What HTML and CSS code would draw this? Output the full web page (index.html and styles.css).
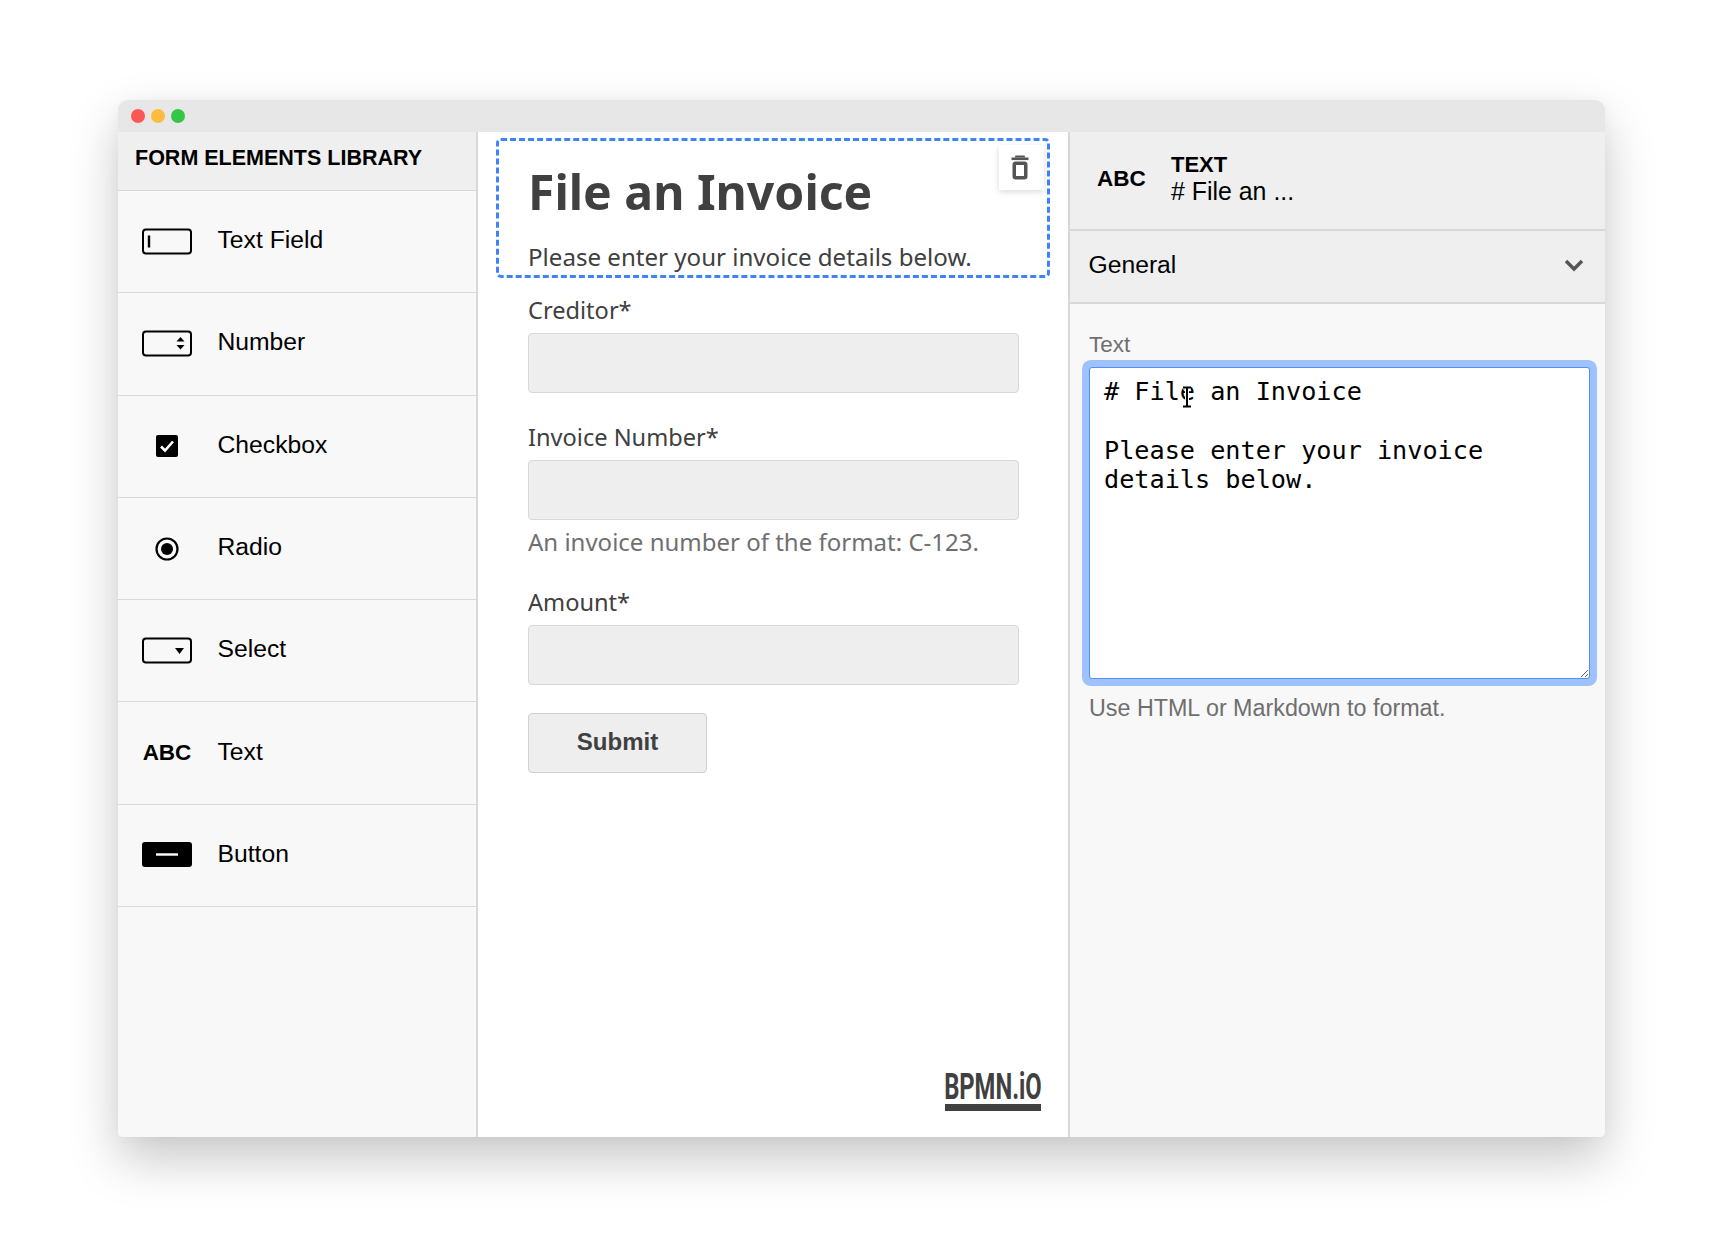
FILE: index.html
```html
<!DOCTYPE html>
<html lang="en">
<head>
    <meta charset="UTF-8">
    <title>Form Builder</title>
    <link rel="stylesheet" href="styles.css">
</head>
<body>
    <div class="window">
        <div class="titlebar">
            <span class="dot dot-red"></span>
            <span class="dot dot-yellow"></span>
            <span class="dot dot-green"></span>
        </div>
        <div class="columns">
            <aside class="library">
                <h2 class="library-title">FORM ELEMENTS LIBRARY</h2>
                <ul class="library-list">
                    <li class="library-item">
                        <span class="item-icon">
                            <svg width="50" height="28" viewBox="0 0 50 28"><rect x="1" y="1.5" width="48" height="24" rx="3" fill="none" stroke="#000" stroke-width="2"/><path d="M7 7.5v12" stroke="#000" stroke-width="2.4"/></svg>
                        </span>
                        Text Field
                    </li>
                    <li class="library-item">
                        <span class="item-icon">
                            <svg width="50" height="28" viewBox="0 0 50 28"><rect x="1" y="1.5" width="48" height="24" rx="3" fill="none" stroke="#000" stroke-width="2"/><path d="M34.5 11.5l4-4.5 4 4.5zM34.5 15l4 4.5 4-4.5z" fill="#000"/></svg>
                        </span>
                        Number
                    </li>
                    <li class="library-item">
                        <span class="item-icon">
                            <svg width="22" height="22" viewBox="0 0 22 22"><rect width="22" height="22" rx="2" fill="#000"/><path d="M5 11.5l4 4 8-9" fill="none" stroke="#fff" stroke-width="2.6"/></svg>
                        </span>
                        Checkbox
                    </li>
                    <li class="library-item">
                        <span class="item-icon">
                            <svg width="24" height="24" viewBox="0 0 24 24"><circle cx="12" cy="12" r="10.5" fill="none" stroke="#000" stroke-width="2.2"/><circle cx="12" cy="12" r="6" fill="#000"/></svg>
                        </span>
                        Radio
                    </li>
                    <li class="library-item">
                        <span class="item-icon">
                            <svg width="50" height="28" viewBox="0 0 50 28"><rect x="1" y="1.5" width="48" height="24" rx="3" fill="none" stroke="#000" stroke-width="2"/><path d="M33 11h9l-4.5 6z" fill="#000"/></svg>
                        </span>
                        Select
                    </li>
                    <li class="library-item">
                        <span class="item-icon item-abc">ABC</span>
                        Text
                    </li>
                    <li class="library-item">
                        <span class="item-icon">
                            <svg width="50" height="26" viewBox="0 0 50 26"><rect width="50" height="25" rx="3" fill="#000"/><path d="M14 12.5h22" stroke="#fff" stroke-width="2.4"/></svg>
                        </span>
                        Button
                    </li>
                </ul>
            </aside>

            <main class="canvas">
                <section class="selected-block">
                    <h1 class="form-title">File an Invoice</h1>
                    <p class="form-intro">Please enter your invoice details below.</p>
                    <button class="trash-btn" type="button" aria-label="Remove">
                        <svg width="18" height="26" viewBox="0 0 18 26"><path d="M5 0.5h8a1 1 0 0 1 1 1V2.5H4V1.5a1 1 0 0 1 1-1z" fill="#555"/><rect x="0.5" y="2.5" width="17" height="2.6" fill="#555"/><rect x="3.25" y="8.25" width="11.5" height="14.5" rx="1.5" fill="none" stroke="#555" stroke-width="3.5"/></svg>
                    </button>
                </section>
                <form class="form-fields">
                    <div class="field">
                        <label class="field-label">Creditor*</label>
                        <input class="field-input" type="text">
                    </div>
                    <div class="field">
                        <label class="field-label">Invoice Number*</label>
                        <input class="field-input" type="text">
                        <div class="field-desc">An invoice number of the format: C-123.</div>
                    </div>
                    <div class="field">
                        <label class="field-label">Amount*</label>
                        <input class="field-input" type="text">
                    </div>
                    <button class="submit-btn" type="button">Submit</button>
                </form>
                <div class="powered-by"><span class="logo-text">BPMN.iO</span></div>
            </main>

            <aside class="properties">
                <div class="props-header">
                    <span class="props-abc">ABC</span>
                    <div class="props-heading">
                        <div class="props-type">TEXT</div>
                        <div class="props-name"># File an ...</div>
                    </div>
                </div>
                <div class="props-group">
                    <span>General</span>
                    <svg width="20" height="13" viewBox="0 0 20 13"><path d="M2 2l8 8 8-8" fill="none" stroke="#555" stroke-width="3.4"/></svg>
                </div>
                <div class="props-body">
                    <label class="props-label">Text</label>
                    <div class="textarea-wrap">
                        <textarea class="props-textarea" spellcheck="false"># File an Invoice

Please enter your invoice details below.</textarea>
                        <svg class="text-cursor" width="12" height="22" viewBox="0 0 12 22"><path d="M2 1.5h8M6 1.5v19M2 20.5h8" fill="none" stroke="#fff" stroke-width="4"/><path d="M2 1.5h8M6 1.5v19M2 20.5h8" fill="none" stroke="#000" stroke-width="2"/></svg>
                    </div>
                    <div class="props-hint">Use HTML or Markdown to format.</div>
                </div>
            </aside>
        </div>
    </div>
</body>
</html>
```

FILE: styles.css
```css
body {
    margin: 0;
    padding: 100px 0 100px 118px;
    background-color: #fff;
    font-family: "Liberation Sans", Arial, sans-serif;
    color: #000;
}

.window {
    width: 1487px;
    height: 1037px;
    display: flex;
    flex-direction: column;
    border-radius: 10px 10px 5px 5px;
    background-color: #f8f8f8;
    box-shadow: 0 22px 50px rgba(0, 0, 0, 0.22), 0 0 14px rgba(0, 0, 0, 0.03);
    overflow: hidden;
}

.titlebar {
    height: 32px;
    flex: none;
    display: flex;
    align-items: center;
    gap: 6px;
    padding-left: 13px;
    background-color: #e7e7e7;
}

.dot {
    width: 14px;
    height: 14px;
    border-radius: 50%;
}

.dot-red { background-color: #fc5753; }
.dot-yellow { background-color: #fdbc40; }
.dot-green { background-color: #33c748; }

.columns {
    flex: 1;
    display: grid;
    grid-template-columns: 360px 590px 537px;
    min-height: 0;
}

/* left column */
.library {
    background-color: #f8f8f8;
    border-right: 2px solid #d8d8d8;
    box-sizing: border-box;
}

.library-title {
    margin: 0;
    height: 59px;
    box-sizing: border-box;
    padding: 13px 0 0 17px;
    font-size: 21.5px;
    line-height: 26px;
    font-weight: bold;
    background-color: #efefef;
    border-bottom: 1px solid #d8d8d8;
}

.library-list {
    list-style: none;
    margin: 0;
    padding: 0;
}

.library-item {
    height: 102.3px;
    box-sizing: border-box;
    display: flex;
    align-items: center;
    font-size: 24.7px;
    padding-bottom: 3px;
    border-bottom: 1px solid #d8d8d8;
}

.item-icon {
    width: 50px;
    margin: 0 25.5px 0 24px;
    display: flex;
    justify-content: center;
    align-items: center;
    flex: none;
    padding-top: 3px;
}

.item-abc {
    font-size: 22.5px;
    font-weight: bold;
}

/* middle column */
.canvas {
    display: flex;
    flex-direction: column;
    background-color: #fff;
    padding: 6px 18px 0 18px;
    box-sizing: border-box;
}

.selected-block {
    position: relative;
    height: 140px;
    box-sizing: border-box;
    border: 3px dashed #3f83f8;
    border-radius: 5px;
    padding: 0 0 0 29px;
    color: #404040;
    flex: none;
}

.form-title {
    margin: 18px 0 0;
    font-family: "Noto Sans", sans-serif;
    font-size: 48.1px;
    line-height: 66px;
    font-weight: 700;
}

.form-intro {
    margin: 16px 0 0;
    font-family: "Noto Sans", sans-serif;
    font-size: 24.1px;
    line-height: 32px;
}

.trash-btn {
    position: absolute;
    top: 4px;
    right: 3px;
    width: 45px;
    height: 45px;
    padding: 0 3px 0 0;
    border: none;
    background-color: #fff;
    box-shadow: 0 2px 6px rgba(0, 0, 0, 0.14);
    display: flex;
    align-items: center;
    justify-content: center;
}

.form-fields {
    padding: 0 31px 0 32px;
    font-family: "Noto Sans", sans-serif;
    color: #404040;
    margin-top: 16px;
}

.field {
    margin-bottom: 28px;
}

.field-label {
    display: block;
    font-size: 23.6px;
    line-height: 32px;
    margin-bottom: 7px;
}

.field-input {
    display: block;
    width: 100%;
    height: 60px;
    box-sizing: border-box;
    background-color: #eee;
    border: 1px solid #d8d8d8;
    border-radius: 4px;
}

.field-desc {
    margin-top: 6px;
    font-size: 24px;
    line-height: 32px;
    color: #6f6f6f;
}

.submit-btn {
    width: 179px;
    height: 60px;
    margin-top: 0;
    padding-bottom: 3px;
    font-family: "Liberation Sans", Arial, sans-serif;
    font-size: 24px;
    font-weight: bold;
    color: #404040;
    background-color: #eee;
    border: 1px solid #d0d0d0;
    border-radius: 4px;
}

.powered-by {
    margin-top: auto;
    margin-bottom: 26px;
    align-self: flex-end;
    width: 96px;
    margin-right: 9px;
    border-bottom: 7px solid #404040;
    display: flex;
    justify-content: center;
}

.logo-text {
    font-family: "Roboto", sans-serif;
    font-weight: 700;
    font-size: 36px;
    line-height: 34px;
    color: #404040;
    transform: scaleX(0.66);
    white-space: nowrap;
}

/* right column */
.properties {
    display: flex;
    flex-direction: column;
    background-color: #f8f8f8;
    border-left: 2px solid #d8d8d8;
    box-sizing: border-box;
}

.props-header {
    height: 99px;
    box-sizing: border-box;
    display: flex;
    align-items: center;
    background-color: #efefef;
    border-bottom: 2px solid #d8d8d8;
    padding: 0 0 5px 27px;
}

.props-abc {
    width: 74px;
    padding-top: 2px;
    font-size: 22.5px;
    font-weight: bold;
}

.props-type {
    font-size: 22px;
    font-weight: bold;
    line-height: 27px;
}

.props-name {
    font-size: 24.9px;
    line-height: 27px;
}

.props-group {
    height: 73px;
    box-sizing: border-box;
    display: flex;
    align-items: center;
    justify-content: space-between;
    padding: 0 21px 3px 18.5px;
    font-size: 24.7px;
    background-color: #efefef;
    border-bottom: 2px solid #d8d8d8;
}

.props-body {
    padding: 27px 9px 0 19px;
}

.props-label {
    display: block;
    font-size: 22.5px;
    line-height: 28px;
    color: #6f6f6f;
    margin-bottom: 8px;
}

.textarea-wrap {
    position: relative;
    height: 312px;
    margin-right: 6px;
}

.props-textarea {
    display: block;
    width: 100%;
    height: 100%;
    box-sizing: border-box;
    margin: 0;
    padding: 9px 14px;
    font-family: "DejaVu Sans Mono", monospace;
    font-size: 25.2px;
    line-height: 29.3px;
    color: #000;
    background-color: #fff;
    border: 1px solid #4d90fe;
    border-radius: 3px;
    outline: none;
    box-shadow: 0 0 0 7px #9fc2ff;
}

.text-cursor {
    position: absolute;
    left: 92px;
    top: 19px;
}

.props-hint {
    margin-top: 15px;
    font-size: 23.3px;
    line-height: 28px;
    color: #6f6f6f;
}
```
